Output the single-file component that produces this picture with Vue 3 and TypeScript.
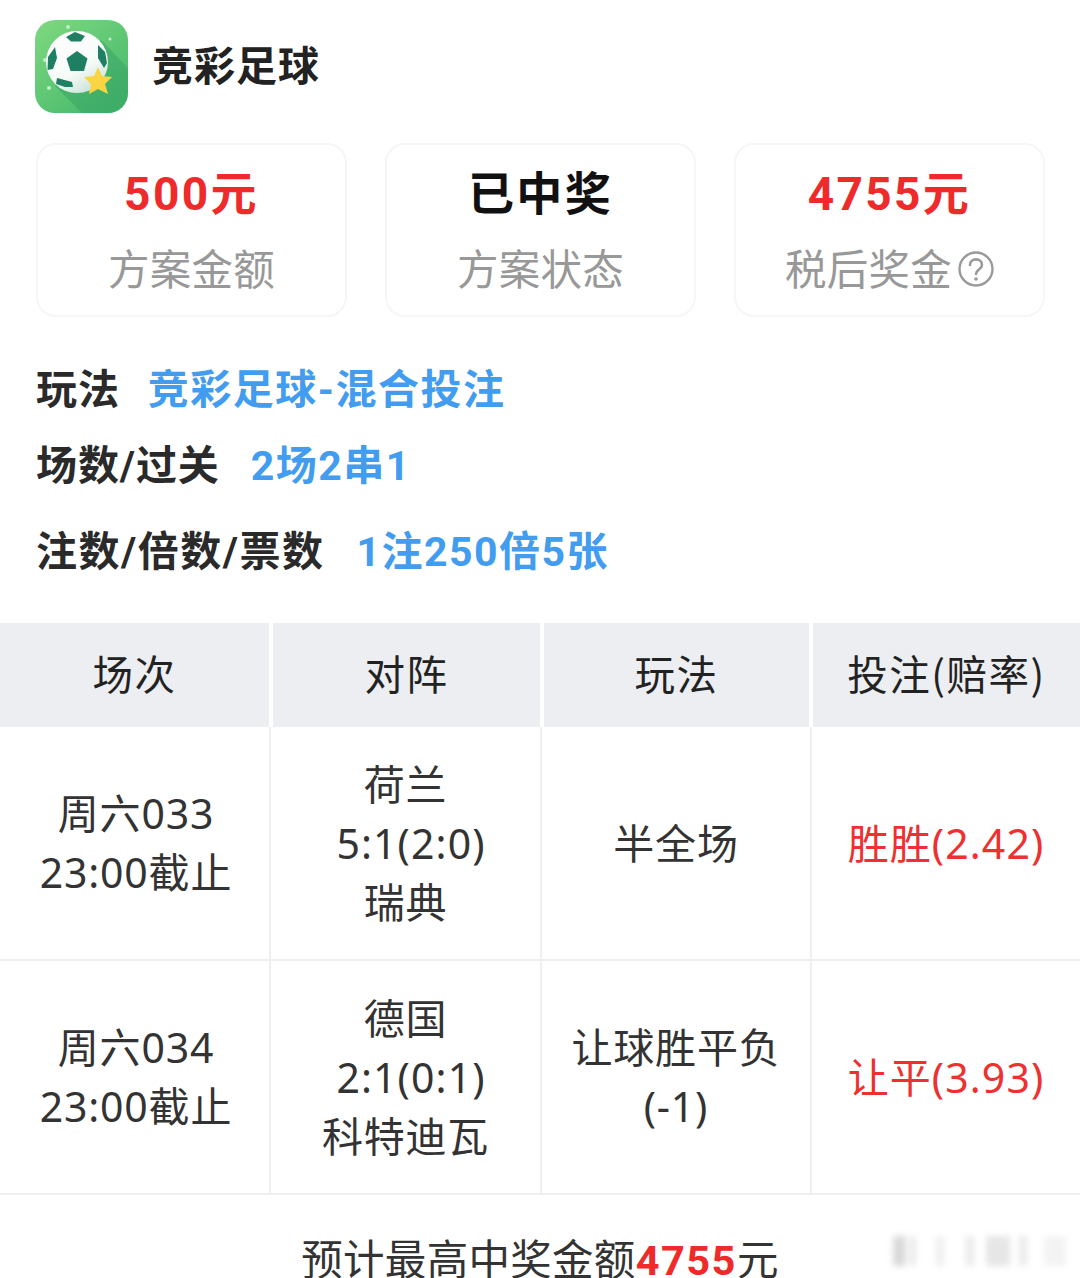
<script setup lang="ts">
interface Stat { value: string; label: string; red: boolean; help?: boolean }
interface Row { slot: string[]; match: string[]; play: string[]; bet: string }

const stats: Stat[] = [
  { value: '500元', label: '方案金额', red: true },
  { value: '已中奖', label: '方案状态', red: false },
  { value: '4755元', label: '税后奖金', red: true, help: true },
]
const infos = [
  { key: '玩法', val: '竞彩足球-混合投注', cls: 'i1' },
  { key: '场数/过关', val: '2场2串1', cls: 'i2' },
  { key: '注数/倍数/票数', val: '1注250倍5张', cls: 'i3' },
]
const heads = ['场次', '对阵', '玩法', '投注(赔率)']
const rows: Row[] = [
  { slot: ['周六033', '23:00截止'], match: ['荷兰', '5:1(2:0)', '瑞典'], play: ['半全场'], bet: '胜胜(2.42)' },
  { slot: ['周六034', '23:00截止'], match: ['德国', '2:1(0:1)', '科特迪瓦'], play: ['让球胜平负', '(-1)'], bet: '让平(3.93)' },
]
const marks = [
  { w: 13, gap: 0, o: 0.22 }, { w: 4, gap: 5, o: 0.18 }, { w: 8, gap: 21, o: 0.1 }, { w: 8, gap: 22, o: 0.12 },
  { w: 24, gap: 12, o: 0.15 }, { w: 8, gap: 9, o: 0.12 }, { w: 22, gap: 17, o: 0.07 },
]
</script>

<template>
  <div class="page">
    <header class="brand">
      <svg class="logo" viewBox="0 0 93 93" aria-hidden="true">
        <defs>
          <linearGradient id="bg" x1="0" y1="0" x2="0.8" y2="1">
            <stop offset="0" stop-color="#7fd980" />
            <stop offset="1" stop-color="#45b86c" />
          </linearGradient>
          <linearGradient id="ballFill" x1="0" y1="0" x2="0.6" y2="1">
            <stop offset="0" stop-color="#ffffff" />
            <stop offset="0.7" stop-color="#f6fbf8" />
            <stop offset="1" stop-color="#cfe5dc" />
          </linearGradient>
          <clipPath id="tile"><rect width="93" height="93" rx="20" /></clipPath>
        </defs>
        <rect width="93" height="93" rx="20" fill="url(#bg)" />
        <path d="M20 66 L66 20 L93 48 L93 93 L47 93 Z" fill="#35a263" opacity="0.5" clip-path="url(#tile)" />
        <circle cx="33" cy="7" r="2" fill="#bdf0c4" />
        <circle cx="10" cy="40" r="2" fill="#bdf0c4" />
        <circle cx="14" cy="68" r="2" fill="#bdf0c4" />
        <circle cx="75" cy="19" r="1.5" fill="#bdf0c4" />
        <circle cx="42" cy="42" r="31" fill="url(#ballFill)" />
        <path d="M42 31 L52.5 38.5 L49 51 L35.5 51 L31.5 38.5 Z" fill="#1f7f63" />
        <path d="M31 17 L40 12 L50 16 L46 21.5 L36 21.5 Z" fill="#1f7f63" />
        <path d="M20 27 L13 37 L12.5 50 L18 49 L22 38 Z" fill="#1f7f63" />
        <path d="M63 25 L70 32 L72 43 L69 48 L63 38 Z" fill="#1f7f63" />
        <path d="M22 58 L37 62 L38 67 L30 67 L21 64 Z" fill="#1f7f63" />
        <path d="M63 47 L67 56 L77 57 L70 64 L73 74 L63 69 L54 74 L56 64 L49 57 L59 56 Z" fill="#f9d543" />
      </svg>
      <h1 class="brand-name">竞彩足球</h1>
    </header>

    <section class="stats">
      <div v-for="s in stats" :key="s.label" class="stat">
        <div class="stat-value" :class="{ red: s.red }">{{ s.value }}</div>
        <div class="stat-label">
          {{ s.label }}
          <svg v-if="s.help" class="help" viewBox="0 0 36 36" aria-hidden="true">
            <circle cx="18" cy="18" r="16.5" fill="none" stroke="#9a9a9a" stroke-width="2.4" />
            <path d="M12 14 C12 6.5 24 6.5 24 14 C24 18 18 18.5 18 23" fill="none" stroke="#9a9a9a" stroke-width="2.6" stroke-linecap="round" />
            <circle cx="18" cy="28" r="1.8" fill="#9a9a9a" />
          </svg>
        </div>
      </div>
    </section>

    <section class="infos">
      <div v-for="i in infos" :key="i.key" class="info" :class="i.cls">
        <span class="info-key">{{ i.key }}</span>
        <span class="info-val">{{ i.val }}</span>
      </div>
    </section>

    <section class="table">
      <div class="thead">
        <div v-for="h in heads" :key="h" class="th">{{ h }}</div>
      </div>
      <div v-for="(r, idx) in rows" :key="idx" class="tr">
        <div class="td slot"><span v-for="t in r.slot" :key="t">{{ t }}</span></div>
        <div class="td match"><span v-for="t in r.match" :key="t">{{ t }}</span></div>
        <div class="td"><span v-for="t in r.play" :key="t">{{ t }}</span></div>
        <div class="td bet"><span>{{ r.bet }}</span></div>
      </div>
    </section>

    <footer class="foot">预计最高中奖金额<b>4755</b>元</footer>

    <div class="watermark" aria-hidden="true">
      <i v-for="(m, idx) in marks" :key="idx" :style="{ width: m.w + 'px', opacity: m.o, marginLeft: m.gap + 'px' }"></i>
    </div>
  </div>
</template>

<style scoped>
.page {
  position: relative;
  width: 1080px;
  height: 1278px;
  overflow: hidden;
  background: #fff;
  font-family: "Noto Sans CJK SC", "Noto Sans", sans-serif;
  color: #222;
}
.brand {
  display: flex;
  align-items: center;
  gap: 24px;
  padding: 20px 0 0 35px;
  height: 93px;
}
.logo { width: 93px; height: 93px; flex: none; }
.brand-name {
  margin: 0;
  padding-bottom: 6px;
  font-size: 41px;
  letter-spacing: 1px;
  font-weight: 700;
  line-height: 1;
  color: #222;
}
.stats {
  display: grid;
  grid-template-columns: repeat(3, 311px);
  gap: 38px;
  margin: 30px 0 0 36px;
}
.stat {
  height: 174px;
  box-sizing: border-box;
  border: 2px solid #f6f6f7;
  border-radius: 20px;
  display: flex;
  flex-direction: column;
  align-items: center;
  padding-top: 20px;
}
.stat-value {
  font-family: Roboto, "Noto Sans CJK SC", sans-serif;
  font-size: 46px;
  font-weight: 700;
  line-height: 58px;
  color: #111;
  letter-spacing: 2.4px;
}
.red { color: #ee2a2a; }
.stat-label {
  display: flex;
  align-items: center;
  gap: 6px;
  margin-top: 15px;
  font-size: 41.5px;
  letter-spacing: 0.3px;
  line-height: 58px;
  color: #989898;
}
.help { width: 36px; height: 36px; margin-top: 4px; }
.infos {
  margin: 0 0 0 36px;
}
.info {
  display: flex;
  align-items: center;
  gap: 31px;
  font-size: 41px;
  line-height: 58px;
  font-family: Roboto, "Noto Sans CJK SC", sans-serif;
}
.i1 { margin-top: 44px; gap: 28px; }
.i2 { margin-top: 18px; }
.i3 { margin-top: 28px; gap: 32px; }
.info-key {
  font-weight: 700;
  color: #2a2a2a;
  letter-spacing: 0.9px;
}
.i3 .info-key { letter-spacing: 1.5px; }
.info-val {
  font-weight: 700;
  color: #429cef;
  letter-spacing: 1.5px;
}
.table { margin-top: 42px; }
.thead {
  display: grid;
  grid-template-columns: 269px 267px 265px 267px;
  column-gap: 4px;
  height: 104px;
}
.th {
  display: flex;
  align-items: center;
  justify-content: center;
  padding-bottom: 6px;
  box-sizing: border-box;
  background: #eceef1;
  font-size: 40.5px;
  letter-spacing: 1.5px;
  color: #222;
}
.tr {
  display: grid;
  grid-template-columns: 271px 271px 270px 268px;
  height: 234px;
  border-bottom: 2px solid #eeeff1;
  box-sizing: border-box;
}
.td {
  display: flex;
  flex-direction: column;
  align-items: center;
  justify-content: center;
  border-right: 2px solid #eeeff1;
  font-size: 41px;
  letter-spacing: 0.8px;
  line-height: 59px;
  color: #333;
  font-family: "Noto Sans", "Noto Sans CJK SC", sans-serif;
  white-space: nowrap;
}
.td:last-child { border-right: 0; }
.slot { padding-left: 3px; }
.match span:nth-child(2) { padding-left: 11px; letter-spacing: 1.1px; }
.bet { color: #ee3030; letter-spacing: 1.1px; }
.foot {
  margin-top: 33px;
  text-align: center;
  font-size: 41.5px;
  letter-spacing: 0.3px;
  line-height: 58px;
  color: #333;
  white-space: nowrap;
}
.foot b {
  font-family: Roboto, sans-serif;
  font-weight: 700;
  color: #ee2a2a;
  letter-spacing: 1.5px;
}
.watermark {
  position: absolute;
  left: 893px;
  top: 1236px;
  display: flex;
  filter: blur(3px);
}
.watermark i {
  display: block;
  height: 30px;
  background: #555;
}
</style>
